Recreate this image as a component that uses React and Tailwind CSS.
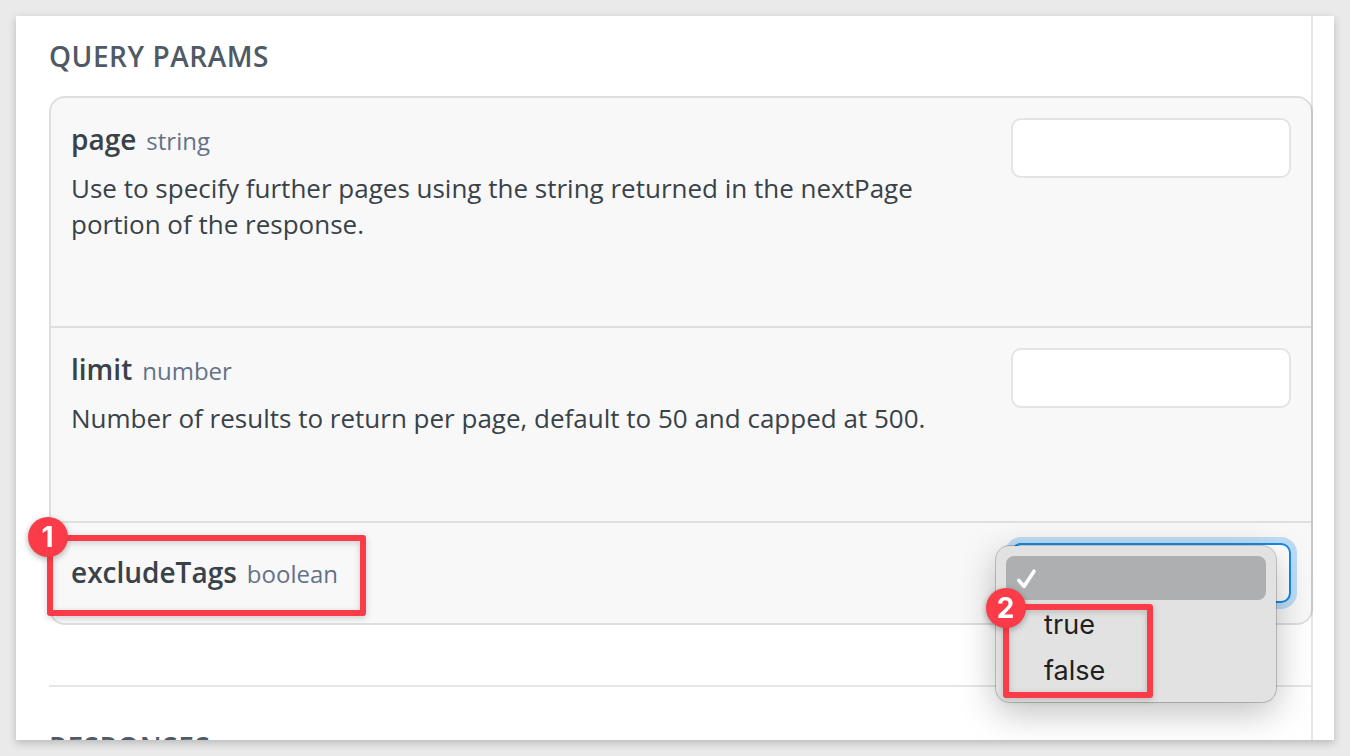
import React from 'react';

function Param({ name, type, titleClass, className, children, control }) {
  return (
    <div className={`flex justify-between px-5 pt-5 ${className}`}>
      <div className="w-[900px] shrink-0">
        <div className={`flex items-baseline gap-[10px] whitespace-nowrap leading-[38px] ${titleClass}`}>
          <span className="text-[28px] font-semibold text-[#384248]">{name}</span>
          <span className="text-[24px] text-[#637288]">{type}</span>
        </div>
        {children}
      </div>
      {control}
    </div>
  );
}

function Field() {
  return <div className="h-[60px] w-[280px] shrink-0 rounded-[10px] border-2 border-[#e4e4e4] bg-white" />;
}

function Badge({ className, children }) {
  return (
    <div className={`absolute flex size-10 items-center justify-center rounded-full bg-[#f93c48] pb-px font-['Inter',sans-serif] text-[28px] leading-none font-bold text-white shadow-[0_2px_6px_rgba(0,0,0,0.15)] ${className}`}>
      {children}
    </div>
  );
}

export default function App() {
  return (
    <div className="h-[756px] w-[1350px] overflow-hidden bg-[#eaeaea] p-4 font-['Open_Sans',sans-serif]">
      <div className="relative h-[724px] w-[1318px] overflow-hidden bg-white shadow-[0_3px_8px_rgba(0,0,0,0.22)]">
        <div className="h-full w-[1297px] border-r-2 border-[#e5e5e5] pl-[33px]">
          <h2 className="h-20 whitespace-nowrap pt-5 text-[28px] leading-10 font-semibold tracking-[0.54px] text-[#4f5a66]">
            QUERY PARAMS
          </h2>
          <div className="relative h-[529px] w-[1264px] rounded-2xl border-2 border-black/[0.13] bg-[#f8f8f8] bg-clip-padding">
            <Param name="page" type="string" titleClass="pt-[2px]" className="h-[230px] border-b-2 border-[#dfdfdf]" control={<Field />}>
              <p className="mt-[10px] whitespace-nowrap text-[26px] leading-9 text-[#384248]">
                Use to specify further pages using the string returned in the nextPage
                <br />
                portion of the response.
              </p>
            </Param>
            <Param name="limit" type="number" titleClass="pt-[2px]" className="h-[195px] border-b-2 border-[#dfdfdf]" control={<Field />}>
              <p className="mt-[10px] whitespace-nowrap text-[26px] leading-9 text-[#384248]">
                Number of results to return per page, default to 50 and capped at 500.
              </p>
            </Param>
            <Param
              name="excludeTags"
              type="boolean"
              titleClass="pt-[10px]"
              className="h-[100px]"
              control={
                <div className="h-[60px] w-[280px] shrink-0 rounded-[10px] border-2 border-[#118cea] bg-white shadow-[0_0_0_6px_rgba(17,140,234,0.25)]" />
              }
            />
          </div>
          <hr className="mt-[60px] -mr-0.5 border-t-2 border-[#e5e5e5]" />
          <h2 className="mt-[40px] whitespace-nowrap text-[28px] leading-10 font-semibold tracking-[0.54px] text-[#4f5a66]">RESPONSES</h2>
        </div>

        <div className="absolute left-[980px] top-[530px] h-[156px] w-[280px] rounded-[14px] bg-[#e2e2e2] p-[10px] shadow-[0_0_0_1px_rgba(0,0,0,0.2),0_10px_36px_rgba(0,0,0,0.26)]">
          <div className="flex h-11 items-center rounded-[8px] bg-[#adafb1] pt-px pl-[10px]">
            <svg width="22" height="22" viewBox="0 0 22 22" fill="none" stroke="white" strokeWidth="3.6" strokeLinecap="round" strokeLinejoin="round">
              <path d="M2.8 12.3 L8 18.4 L18 3.2" />
            </svg>
          </div>
          <div className="flex h-[46px] items-center pt-1 pl-[38px] font-['Inter',sans-serif] text-[27px] tracking-[0.1px] text-[#202020]"><span>true</span></div>
          <div className="flex h-[46px] items-center pt-1 pl-[38px] font-['Inter',sans-serif] text-[27px] text-[#202020]"><span>false</span></div>
        </div>

        <div className="absolute left-[31px] top-[519px] h-[81px] w-[319px] rounded-[3px] border-6 border-[#f93c48] drop-shadow-[0_2px_3px_rgba(0,0,0,0.18)]">
          <Badge className="-left-[25.5px] -top-[24px]">1</Badge>
        </div>
        <div className="absolute left-[987px] top-[588px] h-[94px] w-[150px] rounded-[3px] border-6 border-[#f93c48] drop-shadow-[0_2px_3px_rgba(0,0,0,0.18)]">
          <Badge className="-left-[23.5px] -top-[22px]">2</Badge>
        </div>
      </div>
    </div>
  );
}
